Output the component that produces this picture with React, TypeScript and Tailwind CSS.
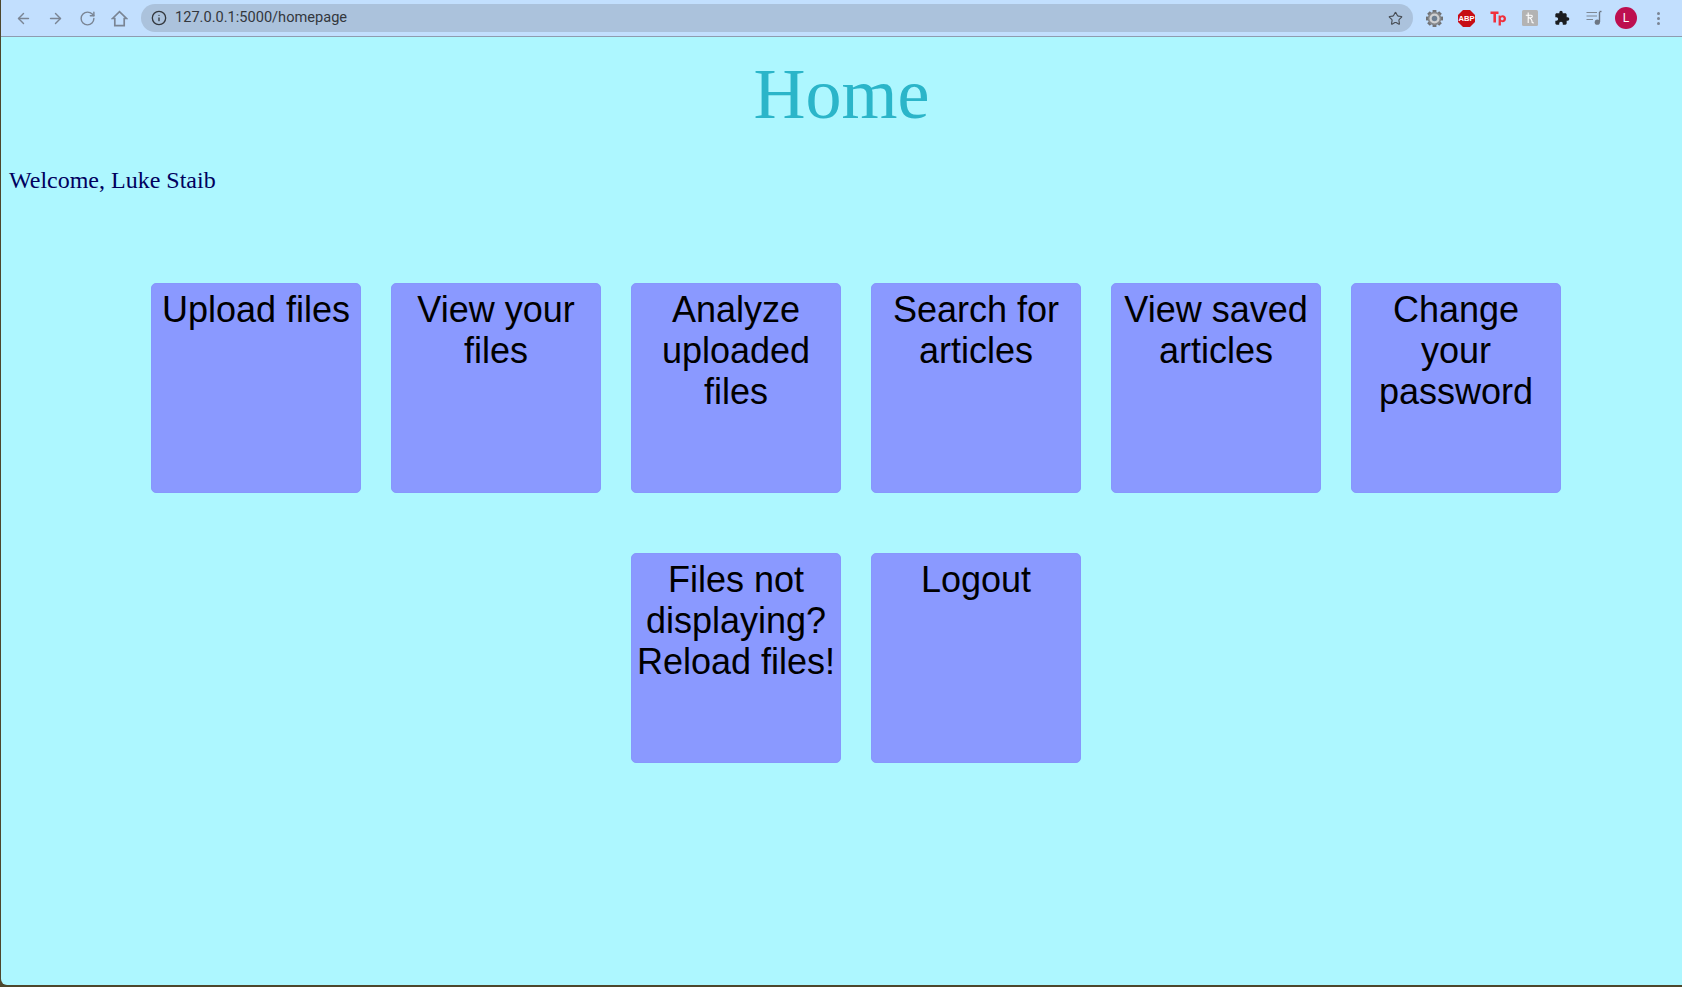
import React from "react";
import { ArrowLeft, ArrowRight, RotateCw, Info, Star } from "lucide-react";

const labels = [
  "Upload files",
  "View your files",
  "Analyze uploaded files",
  "Search for articles",
  "View saved articles",
  "Change your password",
  "Files not displaying? Reload files!",
  "Logout",
];

function Gear() {
  const teeth = [0, 45, 90, 135, 180, 225, 270, 315];
  return (
    <svg width="17" height="17" viewBox="0 0 16 16">
      {teeth.map((a) => (
        <rect key={a} x="6.2" y="0" width="3.6" height="3" fill="#6f7174" transform={`rotate(${a} 8 8)`} />
      ))}
      <circle cx="8" cy="8" r="6.4" fill="#85878a" />
      <circle cx="8" cy="8" r="4.8" fill="#cfd0d1" />
      <circle cx="8" cy="8" r="2.6" fill="#6d7f92" />
    </svg>
  );
}

function Abp() {
  return (
    <svg width="17" height="17" viewBox="0 0 17 17">
      <polygon points="5,0 12,0 17,5 17,12 12,17 5,17 0,12 0,5" fill="#c70d13" />
      <text x="8.5" y="11.2" textAnchor="middle" fontSize="7.6" fontWeight="700" fill="#fff" fontFamily="Liberation Sans, sans-serif">ABP</text>
    </svg>
  );
}

function Tp() {
  return (
    <svg width="17" height="17" viewBox="0 0 17 17">
      <path d="M0.5 1.5H8.5V4H6V12.5H3.4V4H0.5Z" fill="#f0303c" />
      <path d="M8.6 5.5H10.5V6.2C11 5.6 11.8 5.3 12.6 5.3C14.6 5.3 16 6.8 16 8.7C16 10.7 14.6 12.2 12.6 12.2C11.9 12.2 11.3 12 10.9 11.6V15.5H8.6ZM12.2 7.3C11.4 7.3 10.8 7.9 10.8 8.7C10.8 9.6 11.4 10.2 12.2 10.2C13 10.2 13.7 9.6 13.7 8.7C13.7 7.9 13 7.3 12.2 7.3Z" fill="#f0303c" fillRule="evenodd" />
    </svg>
  );
}

function KBox() {
  return (
    <svg width="16" height="16" viewBox="0 0 16 16">
      <rect width="16" height="16" rx="1.5" fill="#b3b3b3" />
      <path d="M6.2 2.5V13M3.8 5.2H9.2C10.6 5.2 10.8 7.6 8.8 7.8H6.4C9 8 10 9.6 10.2 12.6L11.8 13" stroke="#fff" strokeWidth="1.1" fill="none" />
    </svg>
  );
}

function Puzzle() {
  return (
    <svg width="16" height="16" viewBox="0 0 24 24">
      <path d="M20.5 11H19V7c0-1.1-.9-2-2-2h-4V3.5a2.5 2.5 0 0 0-5 0V5H4c-1.1 0-2 .9-2 2v3.8h1.5a2.7 2.7 0 0 1 0 5.4H2V20c0 1.1.9 2 2 2h3.8v-1.5a2.7 2.7 0 0 1 5.4 0V22H17c1.1 0 2-.9 2-2v-4h1.5a2.5 2.5 0 0 0 0-5z" fill="#1b1d20" />
    </svg>
  );
}

function Queue() {
  return (
    <svg width="16" height="16" viewBox="0 0 16 16" fill="none">
      <path d="M0.5 2.5H11M0.5 6H11M0.5 9.5H7" stroke="#7d8894" strokeWidth="1.2" />
      <path d="M13.5 2V12" stroke="#6c7683" strokeWidth="1.4" />
      <path d="M13.5 1.5H15.5" stroke="#6c7683" strokeWidth="1.4" />
      <circle cx="11.3" cy="12.2" r="2.6" fill="#6c7683" />
    </svg>
  );
}

function HomeIcon() {
  return (
    <svg width="17" height="17" viewBox="0 0 17 17" fill="none" stroke="#7a8594" strokeWidth="1.7" strokeLinejoin="miter">
      <path d="M1.5 8.5L8.5 1.6L15.5 8.5H13.2V15.6H3.8V8.5Z" />
    </svg>
  );
}

function Toolbar() {
  return (
    <header className="flex h-[37px] shrink-0 items-center border-b border-[#8f9cb0] bg-[#c2dffe]">
      <div className="ml-[14px] flex items-center gap-[15px] text-[#7a8594]">
        <ArrowLeft size={17} strokeWidth={2} />
        <ArrowRight size={17} strokeWidth={2} />
        <RotateCw size={17} strokeWidth={2} />
        <HomeIcon />
      </div>
      <div className="ml-[13px] flex h-[28px] w-[1272px] items-center rounded-full bg-[#abc2dc] pl-[10px] pr-[10px]">
        <Info size={16} strokeWidth={2} className="text-[#33373d]" />
        <span className="ml-[8px] font-['Roboto',sans-serif] text-[14.6px] text-[#33373d]">
          127.0.0.1:5000/homepage
        </span>
        <Star size={15} strokeWidth={1.8} className="ml-auto text-[#474c53]" />
      </div>
      <div className="ml-[5px] flex items-center">
        <div className="flex w-[32px] justify-center"><Gear /></div>
        <div className="flex w-[32px] justify-center"><Abp /></div>
        <div className="flex w-[32px] justify-center"><Tp /></div>
        <div className="flex w-[32px] justify-center"><KBox /></div>
        <div className="flex w-[32px] justify-center"><Puzzle /></div>
        <div className="flex w-[32px] justify-center"><Queue /></div>
        <div className="flex w-[32px] justify-center">
          <div className="flex h-[22px] w-[22px] items-center justify-center rounded-full bg-[#bd0f4f] font-['Roboto',sans-serif] text-[12px] text-white">L</div>
        </div>
        <div className="flex w-[32px] flex-col items-center gap-[2px]">
          <span className="h-[3px] w-[3px] rounded-full bg-[#7a8594]" />
          <span className="h-[3px] w-[3px] rounded-full bg-[#7a8594]" />
          <span className="h-[3px] w-[3px] rounded-full bg-[#7a8594]" />
        </div>
      </div>
    </header>
  );
}

export default function App() {
  return (
    <div className="flex h-[987px] w-[1682px] flex-col overflow-hidden bg-[#4d472c] pb-[2px] pl-[1px]">
      <Toolbar />
      <main className="flex-1 rounded-bl-[6px] bg-[#adf7ff] font-['Liberation_Serif',serif]">
        <h1 className="mt-[16px] text-center text-[72px] leading-[83px] text-[#2bb5c9]">Home</h1>
        <p className="ml-[8px] mt-[30px] text-[24px] leading-[28px] text-[#00005e]">Welcome, Luke Staib</p>
        <div className="mt-[59px] flex flex-wrap justify-center pl-[29px]">
          {labels.map((label) => (
            <a
              key={label}
              className="mx-[15px] my-[30px] block h-[210px] w-[210px] rounded-[5px] border border-[#8797fc] bg-[#8a99ff] px-[2px] pt-[5px] text-center font-['Liberation_Sans',sans-serif] text-[36px] leading-[41px] text-black"
            >
              {label}
            </a>
          ))}
        </div>
      </main>
    </div>
  );
}
